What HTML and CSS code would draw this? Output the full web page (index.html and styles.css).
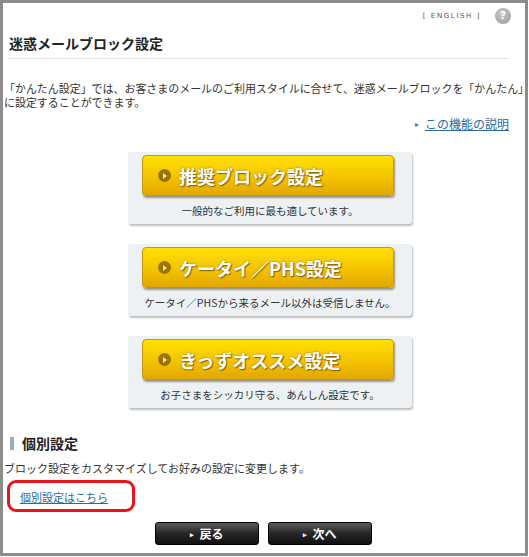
FILE: index.html
```html
<!DOCTYPE html>
<html lang="ja">
<head>
  <meta charset="UTF-8" />
  <title>迷惑メールブロック設定</title>
  <link rel="stylesheet" href="styles.css">
</head>
<body>
  <div class="frame">
    <div class="top-bar">
      <a class="lang" href="#">[ ENGLISH ]</a>
      <span class="help">?</span>
    </div>

    <h1 class="title">迷惑メールブロック設定</h1>

    <p class="lead">「かんたん設定」では、お客さまのメールのご利用スタイルに合せて、迷惑メールブロックを「かんたん」<br>に設定することができます。</p>

    <div class="about"><span class="arrow">▸</span><a href="#">この機能の説明</a></div>

    <div class="panels">
      <div class="panel">
        <button class="easy-btn"><span class="dot"></span>推奨ブロック設定</button>
        <div class="note">一般的なご利用に最も適しています。</div>
      </div>
      <div class="panel">
        <button class="easy-btn"><span class="dot"></span>ケータイ／PHS設定</button>
        <div class="note">ケータイ／PHSから来るメール以外は受信しません。</div>
      </div>
      <div class="panel">
        <button class="easy-btn"><span class="dot"></span>きっずオススメ設定</button>
        <div class="note">お子さまをシッカリ守る、あんしん設定です。</div>
      </div>
    </div>

    <h2 class="sub">個別設定</h2>
    <p class="sub-text">ブロック設定をカスタマイズしてお好みの設定に変更します。</p>
    <div class="custom-link"><a href="#">個別設定はこちら</a></div>

    <div class="nav">
      <button class="nav-btn"><span class="tri">▸</span>戻る</button>
      <button class="nav-btn"><span class="tri">▸</span>次へ</button>
    </div>
  </div>
</body>
</html>
```

FILE: styles.css
```css
body {
  margin: 0;
  background: #fff;
  font-family: "Noto Sans CJK JP", "Noto Sans", sans-serif;
  color: #333;
}

.frame {
  width: 522px;
  border: 3px solid #8c8c8c;
  padding-bottom: 8px;
}

.top-bar {
  display: flex;
  justify-content: flex-end;
  align-items: center;
  gap: 14px;
  height: 18px;
  padding: 4px 14px 0 0;
}

.lang {
  font-family: "DejaVu Sans", sans-serif;
  font-size: 7px;
  letter-spacing: 1.6px;
  color: #555;
  text-decoration: none;
}

.help {
  width: 16px;
  height: 16px;
  border-radius: 50%;
  background: radial-gradient(circle at 40% 35%, #c8c8c8, #9a9a9a);
  color: #fff;
  font-family: "DejaVu Sans", sans-serif;
  font-weight: bold;
  font-size: 11px;
  line-height: 16px;
  text-align: center;
}

.title {
  margin: 8px 16px 0 5px;
  padding: 0 0 5px 1px;
  font-size: 14px;
  line-height: 20px;
  font-weight: bold;
  color: #222;
  border-bottom: 1px solid #e2e2e2;
}

.lead {
  margin: 22px 0 0 1px;
  font-size: 11px;
  line-height: 14px;
  white-space: nowrap;
  letter-spacing: -0.05px;
}

.about {
  margin-top: 8px;
  padding-right: 16px;
  text-align: right;
  font-size: 12px;
  line-height: 14px;
}

.about .arrow {
  color: #3a7cc0;
  font-size: 8px;
  margin-right: 6px;
  vertical-align: 2px;
}

a {
  color: #2a6aa8;
}

.panels {
  display: flex;
  flex-direction: column;
  gap: 20px;
  margin: 21px 0 0 125px;
}

.panel {
  width: 284px;
  padding: 3px 0 5px;
  background: #edf1f4;
  border-radius: 3px;
  box-shadow: 1px 2px 2px rgba(0, 0, 0, 0.25);
}

.easy-btn {
  display: flex;
  align-items: center;
  width: 252px;
  height: 41px;
  margin-left: 14px;
  padding: 0 0 0 15px;
  border: 1px solid #c99a00;
  border-radius: 4px;
  background: linear-gradient(#ffe100, #f3c300 55%, #e2a700);
  box-shadow: 1px 2px 2px rgba(60, 40, 0, 0.45);
  color: #fff;
  font-family: inherit;
  font-size: 18px;
  font-weight: bold;
  text-shadow: 0 0 2px #a07000, 1px 1px 1px #8a5e00;
  cursor: pointer;
}

.dot {
  position: relative;
  width: 13px;
  height: 13px;
  margin-right: 8px;
  border-radius: 50%;
  background: #9a7400;
  flex-shrink: 0;
}

.dot:before {
  position: absolute;
  content: "";
  left: 5px;
  top: 3.5px;
  border-left: 4px solid #ffe680;
  border-top: 3px solid transparent;
  border-bottom: 3px solid transparent;
}

.note {
  margin-top: 7px;
  text-align: center;
  font-size: 10.5px;
  line-height: 16px;
  color: #333;
}

.sub {
  display: flex;
  align-items: center;
  gap: 8px;
  margin: 26px 0 0 7px;
  font-size: 14px;
  line-height: 18px;
  font-weight: bold;
  color: #222;
}

.sub:before {
  content: "";
  width: 4px;
  height: 13px;
  background: #8fb0c4;
}

.sub-text {
  margin: 9px 0 0 1px;
  font-size: 11px;
  line-height: 14px;
}

.custom-link {
  width: 112px;
  height: 26px;
  margin: 5px 0 0 4px;
  padding-left: 10px;
  border: 3px solid #e8141b;
  border-radius: 9px;
  font-size: 11px;
  line-height: 28px;
}

.nav {
  display: flex;
  gap: 9px;
  margin: 10px 0 0 152px;
}

.nav-btn {
  width: 104px;
  height: 23px;
  border: 1px solid #000;
  border-radius: 3px;
  background: linear-gradient(#5a5a5a, #262626 50%, #111);
  color: #fff;
  font-family: inherit;
  font-size: 12px;
  font-weight: bold;
  line-height: 21px;
  padding: 0;
  cursor: pointer;
}

.tri {
  font-size: 7px;
  margin-right: 5px;
  vertical-align: 2px;
}
```
